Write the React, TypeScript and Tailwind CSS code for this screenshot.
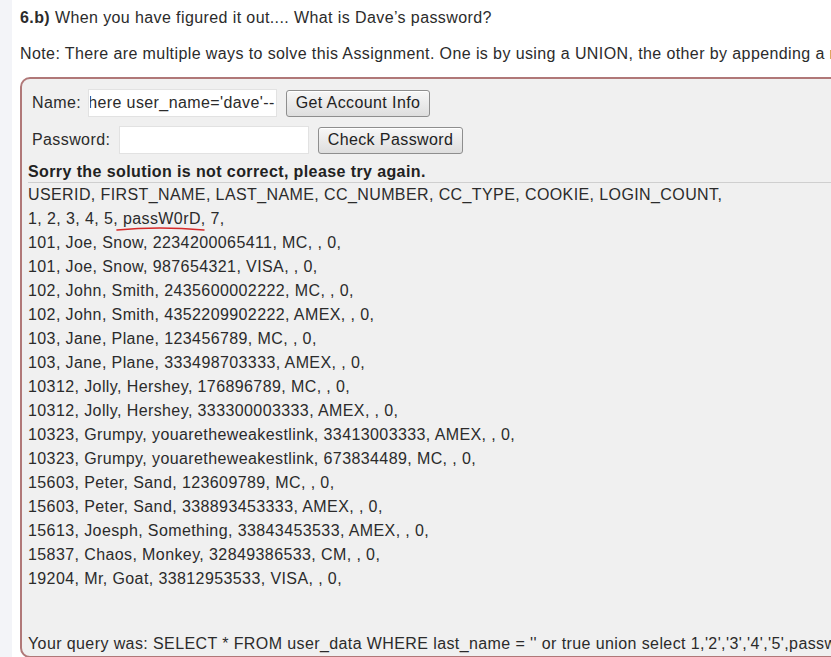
import React, { useEffect, useRef } from 'react';

const rows = [
  '101, Joe, Snow, 2234200065411, MC, , 0,',
  '101, Joe, Snow, 987654321, VISA, , 0,',
  '102, John, Smith, 2435600002222, MC, , 0,',
  '102, John, Smith, 4352209902222, AMEX, , 0,',
  '103, Jane, Plane, 123456789, MC, , 0,',
  '103, Jane, Plane, 333498703333, AMEX, , 0,',
  '10312, Jolly, Hershey, 176896789, MC, , 0,',
  '10312, Jolly, Hershey, 333300003333, AMEX, , 0,',
  '10323, Grumpy, youaretheweakestlink, 33413003333, AMEX, , 0,',
  '10323, Grumpy, youaretheweakestlink, 673834489, MC, , 0,',
  '15603, Peter, Sand, 123609789, MC, , 0,',
  '15603, Peter, Sand, 338893453333, AMEX, , 0,',
  '15613, Joesph, Something, 33843453533, AMEX, , 0,',
  '15837, Chaos, Monkey, 32849386533, CM, , 0,',
  '19204, Mr, Goat, 33812953533, VISA, , 0,',
];

const Button = ({ children, className }: { children: React.ReactNode; className: string }) => (
  <button
    className={`h-[27px] rounded-[3px] border border-[#8e8e8e] bg-gradient-to-b from-[#f7f7f7] to-[#dedede] text-[16px] tracking-[0.4px] text-[#222] leading-none shadow-[inset_0_1px_0_#fff] ${className}`}
  >
    {children}
  </button>
);

export default function App() {
  const nameRef = useRef<HTMLInputElement>(null);

  // the field shows the end of the injected string, as a scrolled input does
  useEffect(() => {
    if (nameRef.current) nameRef.current.scrollLeft = nameRef.current.scrollWidth;
  }, []);

  return (
    <div
      className="w-[831px] h-[657px] overflow-hidden flex bg-white text-[#2b2b2b] text-[16px] tracking-[0.4px]"
      style={{ fontFamily: '"Liberation Sans", Arial, sans-serif' }}
    >
      <div className="w-[12px] shrink-0 bg-[#f3f4f8]" />
      <div className="flex-1 min-w-0 pl-[8px] pt-[7px]">
        <p className="leading-[21px] whitespace-nowrap">
          <b>6.b)</b> When you have figured it out.... What is Dave’s password?
        </p>
        <p className="mt-[15px] leading-[21px] whitespace-nowrap">
          Note: There are multiple ways to solve this Assignment. One is by using a UNION, the other by appending a new SQL statement.
        </p>

        {/* attack form */}
        <div className="mt-[13px] w-[900px] rounded-[10px] border-2 border-[#b07878] bg-[#f0f0f0] pt-[10px] pb-[2px] pl-[6px]">
          <div className="flex items-center h-[28px] pl-[4px]">
            <span className="w-[56px] shrink-0">Name:</span>
            <input
              ref={nameRef}
              readOnly
              defaultValue="Smith' or 1=1 union select * from user_system_data where user_name='dave'--"
              className="w-[189px] h-[28px] bg-white border border-[#e2e2e2] px-[1px] outline-none text-[#2b2b2b] tracking-[0.4px]"
            />
            <Button className="ml-[9px] w-[144px]">Get Account Info</Button>
          </div>
          <div className="flex items-center h-[28px] mt-[9px] pl-[4px]">
            <span className="w-[87px] shrink-0">Password:</span>
            <input readOnly className="w-[190px] h-[28px] bg-white border border-[#e2e2e2] outline-none" />
            <Button className="ml-[9px] w-[145px]">Check Password</Button>
          </div>

          <p className="mt-[7px] font-bold leading-[21px] text-[#222] whitespace-nowrap">
            Sorry the solution is not correct, please try again.
          </p>
          <div className="border-t border-[#cfcfcf]">
            <p className="leading-[24px] whitespace-nowrap">USERID, FIRST_NAME, LAST_NAME, CC_NUMBER, CC_TYPE, COOKIE, LOGIN_COUNT,</p>
            <p className="leading-[24px] whitespace-nowrap">
              1, 2, 3, 4, 5,{' '}
              <span className="relative">
                passW0rD
                <svg
                  className="absolute -left-[7px] top-[15px] w-[calc(100%+12px)] h-[8px]"
                  viewBox="0 0 94 8"
                  preserveAspectRatio="none"
                >
                  <path d="M1 5 Q 45 1 92 5" stroke="#d42a2a" strokeWidth="1.6" fill="none" strokeLinecap="round" />
                </svg>
              </span>
              , 7,
            </p>
            {rows.map((r, i) => (
              <p key={i} className="leading-[24px] whitespace-nowrap">
                {r}
              </p>
            ))}
            <p className="mt-[42px] leading-[21px] whitespace-nowrap">
              Your query was: SELECT * FROM user_data WHERE last_name = '' or true union select 1,'2','3','4','5',password, 7 from user_system_data;--'
            </p>
          </div>
        </div>
      </div>
    </div>
  );
}
